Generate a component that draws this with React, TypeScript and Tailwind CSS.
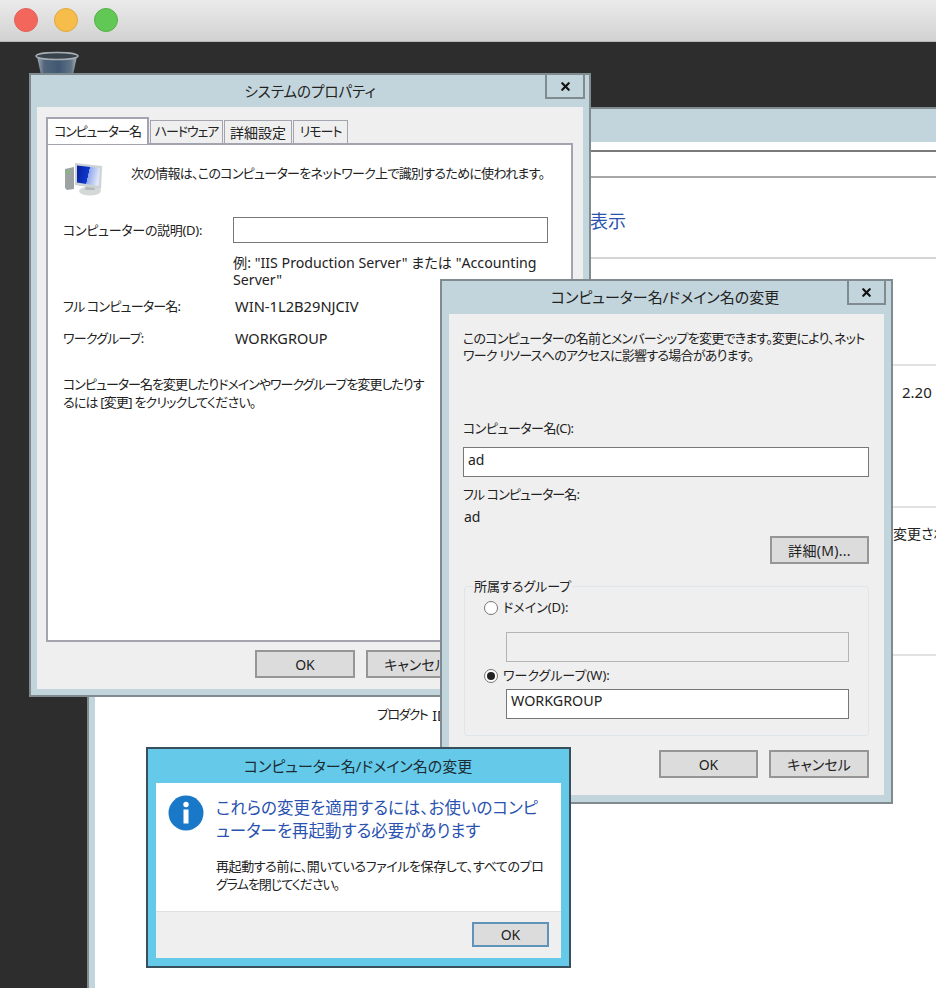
import React from 'react';
import { X } from 'lucide-react';

// Grey push button used across the dialogs
const Btn: React.FC<{ className?: string; children: React.ReactNode }> = ({ className = '', children }) => (
  <button className={`flex shrink-0 items-center justify-center border-2 border-[#969696] bg-[#dcdcdc] text-[14px] text-[#222] ${className}`}>
    {children}
  </button>
);

const CloseBtn: React.FC<{ className?: string }> = ({ className = '' }) => (
  <div className={`absolute top-0 flex items-center justify-center border-2 border-t-0 border-[#808b90] bg-[#c3d5dc] ${className}`}>
    <X size={13} strokeWidth={4} className="text-[#111]" />
  </div>
);

const Radio: React.FC<{ checked?: boolean }> = ({ checked }) => (
  <span className="flex h-[14px] w-[14px] items-center justify-center rounded-full border border-[#777] bg-white">
    {checked && <span className="h-[8px] w-[8px] rounded-full bg-[#222]" />}
  </span>
);

const ComputerIcon = () => (
  <svg width="37" height="33" viewBox="0 0 37 33" className="shrink-0">
    <defs>
      <linearGradient id="screen" x1="0" y1="0" x2="1" y2="0.2">
        <stop offset="0" stopColor="#08209a" />
        <stop offset="0.55" stopColor="#0d38d0" />
        <stop offset="0.56" stopColor="#8fa6ea" />
        <stop offset="1" stopColor="#dfe6f8" />
      </linearGradient>
    </defs>
    <ellipse cx="25" cy="28" rx="11" ry="4.500" fill="#d5d8d8" />
    <path d="M21 22h8l1 5h-10z" fill="#b4b8b8" />
    <path d="M0 6l9-2v22l-7 1-2-2z" fill="#9da3a3" />
    <path d="M1 8l3-1v3l-3 1z" fill="#7fbf6a" />
    <path d="M10 0l27 3-1 23-26-4z" fill="#cdd2d4" />
    <path d="M12 2.500l23 2.500-1 18-22-3.500z" fill="url(#screen)" />
  </svg>
);

const TrashIcon = () => (
  <svg width="44" height="24" viewBox="0 0 44 24" className="absolute left-[35px] top-[51px]">
    <defs>
      <linearGradient id="bin" x1="0" y1="0" x2="1" y2="0">
        <stop offset="0" stopColor="#a4aeb6" />
        <stop offset="0.18" stopColor="#51657a" />
        <stop offset="0.55" stopColor="#3f5873" />
        <stop offset="0.85" stopColor="#5f7386" />
        <stop offset="1" stopColor="#aab3ba" />
      </linearGradient>
    </defs>
    <path d="M2 5l4 19h32l4-19z" fill="url(#bin)" />
    <ellipse cx="22" cy="5" rx="21" ry="3.500" fill="#39434c" stroke="#a7afb5" strokeWidth="1.500" />
  </svg>
);

const InfoIcon = () => (
  <svg width="36" height="36" viewBox="0 0 36 36" className="shrink-0">
    <circle cx="18" cy="18" r="17.500" fill="#1a78c9" />
    <circle cx="18" cy="9.500" r="2.700" fill="#fff" />
    <rect x="15.500" y="14.500" width="5" height="14" fill="#fff" />
  </svg>
);

const SystemProperties = () => (
  <section className="absolute left-[29px] top-[73px] flex h-[624px] w-[562px] flex-col border-2 border-[#808b90] bg-[#c3d5dc]">
    <CloseBtn className="right-[4px] h-[24px] w-[40px]" />
    <h1 className="h-[32px] pt-[4px] text-center text-[14.5px] leading-[24px] font-normal text-[#222]">システムのプロパティ</h1>
    <div className="mx-[6px] mb-[6px] flex flex-1 flex-col bg-[#efefef] px-[9px]">
      <div className="flex h-[36px] items-end">
        <div className="z-10 -mb-px flex h-[27px] w-[103px] items-center justify-center border-2 border-b-0 border-[#a4a4b0] bg-white text-[13px] tracking-[-1.3px] whitespace-nowrap text-[#222]">コンピューター名</div>
        <div className="ml-px flex h-[23px] w-[73px] items-center justify-center border border-b-0 border-[#a4a4b0] bg-[#efefef] text-[13px] tracking-[-1.1px] text-[#222]">ハードウェア</div>
        <div className="ml-px flex h-[23px] w-[68px] items-center justify-center border border-b-0 border-[#a4a4b0] bg-[#efefef] text-[14px] text-[#222]">詳細設定</div>
        <div className="ml-px flex h-[23px] w-[55px] items-center justify-center border border-b-0 border-[#a4a4b0] bg-[#efefef] text-[13px] tracking-[-1px] text-[#222]">リモート</div>
      </div>
      <div className="h-[499px] w-[527px] shrink-0 border-2 border-[#a4a4b0] bg-white pl-[15px] text-[13px] leading-[18px] text-[#222]">
        <div className="flex items-start pl-[2px] pt-[18px]">
          <ComputerIcon />
          <p className="ml-[29px] pt-[1px] tracking-[-0.7px] whitespace-nowrap">次の情報は、このコンピューターをネットワーク上で識別するために使われます。</p>
        </div>
        <div className="mt-[21px] flex items-center">
          <span className="w-[170px] tracking-[-0.3px]">コンピューターの説明(D):</span>
          <div className="h-[26px] w-[315px] border border-[#777] bg-white" />
        </div>
        <p className="mt-[11px] ml-[170px] text-[14.2px] leading-[17px] whitespace-nowrap">
          例: "IIS Production Server" または "Accounting
          <br />
          Server"
        </p>
        <dl className="mt-[9px] grid grid-cols-[172px_1fr] gap-y-[14px]">
          <dt className="tracking-[-0.8px]">フル コンピューター名:</dt>
          <dd className="text-[14.7px]">WIN-1L2B29NJCIV</dd>
          <dt className="tracking-[-0.8px]">ワークグループ:</dt>
          <dd className="text-[14.5px]">WORKGROUP</dd>
        </dl>
        <p className="mt-[28px] tracking-[-1px] whitespace-nowrap">
          コンピューター名を変更したりドメインやワークグループを変更したりす
          <br />
          <span className="tracking-[-0.8px]">るには [変更] をクリックしてください。</span>
        </p>
      </div>
      <div className="mt-[8px] flex gap-[11px] pl-[209px]">
        <Btn className="h-[28px] w-[100px]">OK</Btn>
        <Btn className="h-[28px] w-[100px]">キャンセル</Btn>
      </div>
    </div>
  </section>
);

const RenameDialog = () => (
  <section className="absolute left-[440px] top-[279px] flex h-[525px] w-[453px] flex-col border-2 border-[#808b90] bg-[#c3d5dc]">
    <CloseBtn className="right-[5px] h-[24px] w-[39px]" />
    <h2 className="h-[33px] pt-[4px] pr-[3px] text-center text-[15px] leading-[24px] font-normal text-[#222]">コンピューター名/ドメイン名の変更</h2>
    <div className="mx-[7px] mb-[7px] flex flex-1 flex-col bg-[#efefef] px-[14px] text-[13px] leading-[17px] text-[#222]">
      <p className="mt-[16px] tracking-[-0.75px] whitespace-nowrap">
        このコンピューターの名前とメンバーシップを変更できます。変更により、ネット
        <br />
        ワーク&nbsp;リソースへのアクセスに影響する場合があります。
      </p>
      <label className="mt-[56px] tracking-[-0.5px]">コンピューター名(C):</label>
      <div className="mt-[10px] flex h-[30px] w-[406px] shrink-0 items-start border border-[#777] bg-white px-[4px] pt-[3px] text-[14px]">ad</div>
      <p className="mt-[9px] tracking-[-0.9px]">フル コンピューター名:</p>
      <p className="mt-[5px] ml-px text-[14px]">ad</p>
      <div className="mt-[11px] flex justify-end pr-[1px]">
        <Btn className="h-[28px] w-[99px] tracking-[0.3px]">詳細(M)...</Btn>
      </div>
      <fieldset className="mt-[15px] ml-[1px] h-[157px] w-[404px] shrink-0 rounded-[3px] border border-[#dfe6ea] px-[19px]">
        <legend className="ml-[-11px] px-[1px] text-[13px] leading-[15px]">所属するグループ</legend>
        <div className="mt-[5px] flex items-center gap-[5px]">
          <Radio />
          <span>ドメイン(D):</span>
        </div>
        <div className="mt-[16px] ml-[22px] h-[30px] w-[343px] border border-[#b4b4b4] bg-[#efefef]" />
        <div className="mt-[5px] flex items-center gap-[5px]">
          <Radio checked />
          <span>ワークグループ(W):</span>
        </div>
        <div className="mt-[5px] ml-[22px] h-[30px] w-[343px] border border-[#777] bg-white px-[4px] pt-[2px] text-[14.3px]">WORKGROUP</div>
      </fieldset>
      <div className="mt-[14px] flex justify-end gap-[11px] pr-[1px]">
        <Btn className="h-[28px] w-[99px]">OK</Btn>
        <Btn className="h-[28px] w-[100px]">キャンセル</Btn>
      </div>
    </div>
  </section>
);

const RestartAlert = () => (
  <section className="absolute left-[146px] top-[747px] flex h-[221px] w-[425px] flex-col border-2 border-[#38505c] bg-[#65c9ea]">
    <h2 className="h-[34px] pt-[5px] pr-[1px] text-center text-[15px] leading-[24px] font-normal text-[#1c2c33]">コンピューター名/ドメイン名の変更</h2>
    <div className="mx-[8px] mb-[8px] flex flex-1 flex-col bg-white">
      <div className="flex flex-1 items-start pl-[12px] pt-[12px]">
        <InfoIcon />
        <div className="mt-px ml-[12px] whitespace-nowrap">
          <p className="text-[16.5px] leading-[23px] text-[#2a52b0]">
            これらの変更を適用するには、お使いのコンピ
            <br />
            ューターを再起動する必要があります
          </p>
          <p className="mt-[15px] text-[13px] leading-[18px] tracking-[-0.4px] text-[#222]">
            再起動する前に、開いているファイルを保存して、すべてのプロ
            <br />
            <span className="tracking-[-1px]">グラムを閉じてください。</span>
          </p>
        </div>
      </div>
      <div className="flex h-[47px] items-center justify-end border-t border-[#e0e0e0] bg-[#efefef] pr-[12px] pb-px">
        <button className="flex h-[25px] w-[77px] items-center justify-center border-2 border-[#5f93ba] bg-[#dcdcdc] text-[14px] text-[#222]">OK</button>
      </div>
    </div>
  </section>
);

// Server Manager style window that sits behind the dialogs
const BackWindow = () => (
  <section className="absolute left-[87px] top-[107px] flex h-[930px] w-[900px] flex-col border-l-2 border-t-2 border-[#808b90] bg-[#c3d5dc]">
    <div className="ml-[6px] mt-[33px] flex-1 bg-white text-[14px] text-[#222]">
      <div className="h-[8px]" />
      <div className="h-[28px] border-y-2 border-t-[#7a7a7a] border-b-[#a8a8a8]" />
      <div className="flex h-[81px] items-center border-b-2 border-[#d4d4d4] pt-[7px] pl-[495px] text-[18px] text-[#2a52b0]">表示</div>
      <div className="h-[107px] border-b-2 border-[#e2e2e2]" />
      <div className="h-[142px] border-b-2 border-[#e2e2e2] pl-[807px] pt-[15px] text-[15px]">2.20</div>
      <div className="h-[148px] overflow-hidden border-b-2 border-[#e2e2e2] pl-[798px] pt-[15px] whitespace-nowrap">変更されて</div>
      <div className="flex gap-[5px] pl-[282px] pt-[49px] whitespace-nowrap">
        <span className="text-[13px] tracking-[-1.6px]">プロダクト</span>
        <span>ID</span>
      </div>
    </div>
  </section>
);

const App: React.FC = () => {
  return (
    <div className="relative h-[988px] w-[936px] overflow-hidden bg-[#2d2d2d] font-['Noto_Sans','Noto_Sans_CJK_JP',sans-serif] [font-feature-settings:'palt']">
      {/* Mac window chrome */}
      <header className="flex h-[42px] items-center gap-[16px] border-b border-[#b5b5b5] bg-gradient-to-b from-[#ebebeb] to-[#d2d2d2] pb-[2px] pl-[14px]">
        <span className="h-[24px] w-[24px] rounded-full border border-[#e0625a] bg-[#f2665c]" />
        <span className="h-[24px] w-[24px] rounded-full border border-[#e0a83e] bg-[#f6bd4b]" />
        <span className="h-[24px] w-[24px] rounded-full border border-[#55b04a] bg-[#62c855]" />
      </header>
      <TrashIcon />
      <BackWindow />
      <SystemProperties />
      <RenameDialog />
      <RestartAlert />
    </div>
  );
};

export default App;
